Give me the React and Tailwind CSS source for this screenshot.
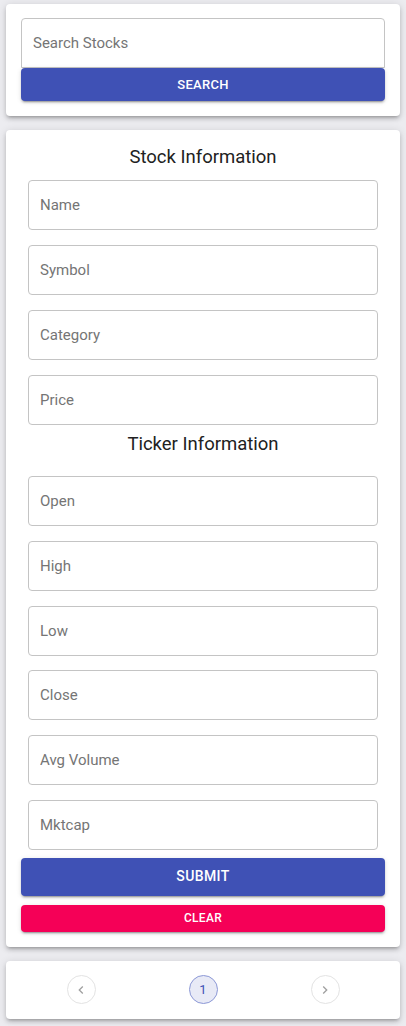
import { useState } from "react";

const STOCK_FIELDS = ["Name", "Symbol", "Category", "Price"];
const TICKER_FIELDS = ["Open", "High", "Low", "Close", "Avg Volume", "Mktcap"];

const cardShadow =
    "shadow-[0_3px_3px_-2px_rgba(0,0,0,0.2),0_3px_4px_0_rgba(0,0,0,0.14),0_1px_8px_0_rgba(0,0,0,0.12)]";
const btnShadow =
    "shadow-[0_3px_1px_-2px_rgba(0,0,0,0.2),0_2px_2px_0_rgba(0,0,0,0.14),0_1px_5px_0_rgba(0,0,0,0.12)]";

const Field = ({ label, value, onChange, className = "" }) => (
    <input
        type="text"
        placeholder={label}
        value={value}
        onChange={(e) => onChange(e.target.value)}
        className={`block w-full h-[50px] px-[11px] rounded-[4px] border border-[#c4c4c4] bg-white text-[15px] text-[#212121] placeholder:text-[#757575] outline-none focus:border-[#3f51b5] ${className}`}
    />
);

const ChevronLeft = () => (
    <svg width="16" height="16" viewBox="0 0 24 24" fill="none">
        <path d="M15.41 7.41 14 6l-6 6 6 6 1.41-1.41L10.83 12z" fill="#a0a0a0" />
    </svg>
);

const ChevronRight = () => (
    <svg width="16" height="16" viewBox="0 0 24 24" fill="none">
        <path d="M10 6 8.59 7.41 13.17 12l-4.58 4.59L10 18l6-6z" fill="#a0a0a0" />
    </svg>
);

const App = () => {
    const [search, setSearch] = useState("");
    const [form, setForm] = useState({});

    const setField = (key) => (val) => setForm((f) => ({ ...f, [key]: val }));

    return (
        <div
            className="min-h-screen bg-[#ececf0] px-[6px] pt-[4px] pb-[7px] flex flex-col gap-[14px]"
            style={{ fontFamily: "Roboto, 'Liberation Sans', sans-serif" }}
        >
            {/* search */}
            <div className={`bg-white rounded-[4px] ${cardShadow} px-[15px] pt-[14px] pb-[15px]`}>
                <Field label="Search Stocks" value={search} onChange={setSearch} className="rounded-b-none" />
                <button
                    className={`w-full h-[33px] rounded-[4px] bg-[#3f51b5] text-white text-[13px] font-medium uppercase tracking-[0.3px] ${btnShadow}`}
                >
                    Search
                </button>
            </div>

            {/* form */}
            <div className={`bg-white rounded-[4px] ${cardShadow} px-[15px] pt-[12px] pb-[15px]`}>
                <h2 className="text-center text-[18.5px] leading-[30px] text-[#212121] font-normal">Stock Information</h2>
                <div className="px-[7px] mt-[8px] flex flex-col gap-[15px]">
                    {STOCK_FIELDS.map((f) => (
                        <Field key={f} label={f} value={form[f] || ""} onChange={setField(f)} />
                    ))}
                </div>
                <h2 className="text-center text-[18.5px] leading-[30px] text-[#212121] font-normal mt-[4px]">Ticker Information</h2>
                <div className="px-[7px] mt-[17px] flex flex-col gap-[14.8px]">
                    {TICKER_FIELDS.map((f) => (
                        <Field key={f} label={f} value={form[f] || ""} onChange={setField(f)} />
                    ))}
                </div>
                <button
                    className={`mt-[8px] w-full h-[38px] rounded-[4px] bg-[#3f51b5] text-white text-[14px] font-medium uppercase tracking-[0.4px] ${btnShadow}`}
                >
                    Submit
                </button>
                <button
                    onClick={() => setForm({})}
                    className={`mt-[9px] w-full h-[27px] rounded-[4px] bg-[#f50057] text-white text-[12px] font-medium uppercase tracking-[0.3px] ${btnShadow}`}
                >
                    Clear
                </button>
            </div>

            {/* pagination */}
            <div className={`bg-white rounded-[4px] ${cardShadow} h-[58px] flex items-center justify-center gap-[93px]`}>
                <button className="w-[29px] h-[29px] rounded-full border border-[#e3e3e3] flex items-center justify-center">
                    <ChevronLeft />
                </button>
                <button className="w-[29px] h-[29px] rounded-full border border-[#8c98d6] bg-[#e8eaf6] text-[#3f51b5] text-[13px] flex items-center justify-center">
                    1
                </button>
                <button className="w-[29px] h-[29px] rounded-full border border-[#e3e3e3] flex items-center justify-center">
                    <ChevronRight />
                </button>
            </div>
        </div>
    );
};

export default App;
